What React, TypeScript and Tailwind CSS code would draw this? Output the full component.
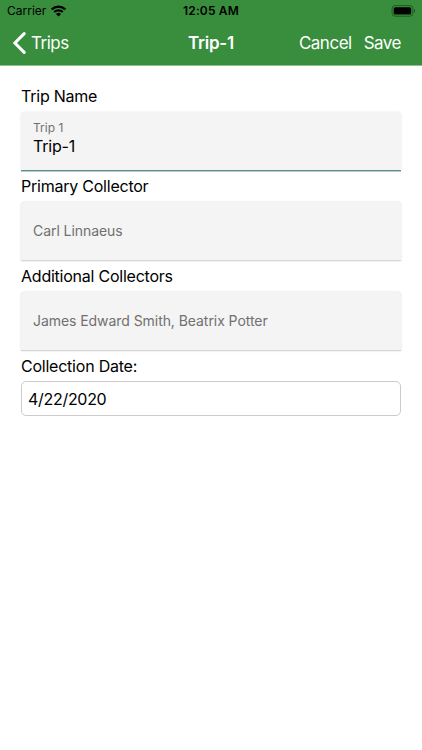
import type { ReactNode } from 'react';

function StatusBar() {
  return (
    <div className="grid h-[21px] grid-cols-3 items-center text-black">
      <div className="flex items-center gap-[5px] pl-[7px] pt-px">
        <span className="text-[12px] leading-none tracking-[0px]">Carrier</span>
        <svg width="15" height="12" viewBox="0 0 15 12" fill="none" stroke="currentColor" strokeWidth="2.1">
          <path d="M0.7 4.400a9.600 9.600 0 0 1 13.600 0" />
          <path d="M3.2 7.100a6.100 6.100 0 0 1 8.600 0" />
          <path d="M5 9.100a3.500 3.500 0 0 1 5 0L7.500 11.600z" fill="currentColor" stroke="none" />
        </svg>
      </div>
      <div className="pt-px text-center text-[12px] font-semibold leading-none tracking-[0.15px]">12:05 AM</div>
      <div className="flex justify-end pr-[6px]">
        <svg width="25" height="12" viewBox="0 0 25 12">
          <rect x="1.100" y="0.6" width="20.800" height="10.600" rx="3" fill="none" stroke="#1d5a20" strokeWidth="1" />
          <rect x="2.700" y="2.200" width="17.500" height="7.400" rx="1.500" fill="#000" />
          <path d="M23 4v4c.8-.4 1.200-1.100 1.200-2s-.4-1.600-1.200-2z" fill="#1d5a20" />
        </svg>
      </div>
    </div>
  );
}

function NavBar() {
  return (
    <div className="grid h-[44px] grid-cols-[1fr_auto_1fr] items-center text-[17px] leading-none text-white">
      <div className="flex items-center gap-[5px] pl-[13px]">
        <svg width="13" height="22" viewBox="0 0 13 22" fill="none" stroke="currentColor" strokeWidth="3" strokeLinecap="round">
          <path d="M11.200 1.600 1.900 11l9.300 9.400" strokeLinejoin="miter" />
        </svg>
        <span className="pt-px tracking-[-0.5px]">Trips</span>
      </div>
      <h1 className="pt-px font-semibold tracking-[-0.2px]">Trip-1</h1>
      <div className="flex justify-end gap-[12px] pr-[21px] pt-px">
        <span className="tracking-[-0.5px]">Cancel</span>
        <span className="tracking-[-0.5px]">Save</span>
      </div>
    </div>
  );
}

function Label({ children }: { children: ReactNode }) {
  return <div className="flex h-[31px] items-center pb-[1px] text-[16px] leading-none tracking-[-0.23px] text-black">{children}</div>;
}

function Field({ placeholder, value }: { placeholder: string; value?: string }) {
  if (value) {
    return (
      <div className="h-[59px] rounded-t-[4px] border-b border-[#64898b] bg-[#f4f4f4] px-[12px] pt-[8px] shadow-[0_0_2px_rgba(0,0,0,0.12),0_1px_0_#b9d6d6]">
        <div className="text-[12px] leading-[15px] tracking-[0px] text-[#707070]">{placeholder}</div>
        <div className="text-[16px] leading-[22px] tracking-[-0.2px] text-black">{value}</div>
      </div>
    );
  }
  return (
    <div className="flex h-[59px] items-center rounded-t-[4px] border-b border-[#d6d6d6] bg-[#f4f4f4] px-[12px] text-[14px] leading-none tracking-[-0.06px] text-[#707070] shadow-[0_0_2px_rgba(0,0,0,0.18)]">
      {placeholder}
    </div>
  );
}

export default function App() {
  return (
    <div className="min-h-screen bg-white font-['Inter',sans-serif]">
      <header className="h-[66px] border-b border-[#8fbf91] bg-[#388e3c]">
        <StatusBar />
        <NavBar />
      </header>
      <main className="px-[21px] pt-[15px]">
        <Label>Trip Name</Label>
        <Field placeholder="Trip 1" value="Trip-1" />
        <Label>Primary Collector</Label>
        <Field placeholder="Carl Linnaeus" />
        <Label>Additional Collectors</Label>
        <Field placeholder="James Edward Smith, Beatrix Potter" />
        <Label>Collection Date:</Label>
        <div className="-mt-px flex h-[35px] items-center rounded-[5px] border border-[#cbcbcb] px-[6px] text-[16px] leading-none tracking-[-0.3px] text-black">
          4/22/2020
        </div>
      </main>
    </div>
  );
}
